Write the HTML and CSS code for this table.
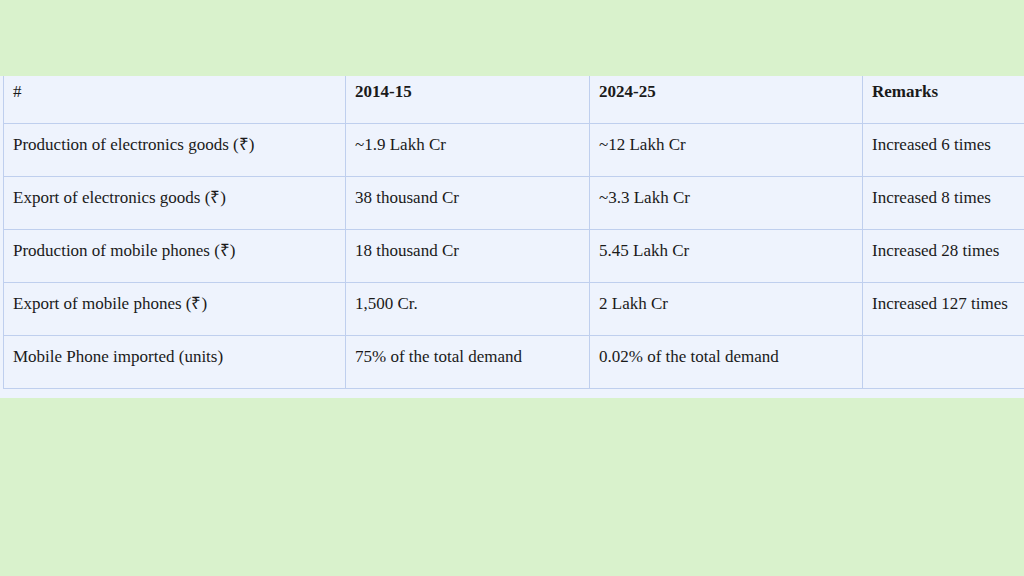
FILE: index.html
```html
<!DOCTYPE html>
<html lang="en">
<head>
<meta charset="utf-8">
<title>Electronics manufacturing 2014-15 vs 2024-25</title>
<link rel="stylesheet" href="styles.css">
</head>
<body>
<div class="top-gap"></div>
<div class="panel">
  <table class="data">
    <colgroup>
      <col class="c1"><col class="c2"><col class="c3"><col class="c4">
    </colgroup>
    <thead>
      <tr><th class="plain">#</th><th>2014-15</th><th>2024-25</th><th>Remarks</th></tr>
    </thead>
    <tbody>
      <tr><td>Production of electronics goods (₹)</td><td>~1.9 Lakh Cr</td><td>~12 Lakh Cr</td><td>Increased 6 times</td></tr>
      <tr><td>Export of electronics goods (₹)</td><td>38 thousand Cr</td><td>~3.3 Lakh Cr</td><td>Increased 8 times</td></tr>
      <tr><td>Production of mobile phones (₹)</td><td>18 thousand Cr</td><td>5.45 Lakh Cr</td><td>Increased 28 times</td></tr>
      <tr><td>Export of mobile phones (₹)</td><td>1,500 Cr.</td><td>2 Lakh Cr</td><td>Increased 127 times</td></tr>
      <tr><td>Mobile Phone imported (units)</td><td>75% of the total demand</td><td>0.02% of the total demand</td><td></td></tr>
    </tbody>
  </table>
</div>
</body>
</html>
```

FILE: styles.css
```css
html, body {
  margin: 0;
  padding: 0;
}
body {
  background: #d9f2cc;
  width: 1024px;
  height: 576px;
  overflow: hidden;
  font-family: "Liberation Serif", "Times New Roman", serif;
  color: #1a1a1a;
}
.top-gap {
  height: 76px;
}
.panel {
  background: #eef3fd;
  height: 322px;
  overflow: hidden;
  padding-left: 3px;
}
.data {
  border-collapse: collapse;
  table-layout: fixed;
  width: 1060px;
  margin-top: -6px;
  font-size: 17px;
  line-height: 20px;
}
.c1 { width: 342px; }
.c2 { width: 244px; }
.c3 { width: 273px; }
.c4 { width: 201px; }
.data th,
.data td {
  border: 1px solid #bfcfee;
  padding: 11px 9px 21px;
  height: 20px;
  text-align: left;
  vertical-align: top;
  white-space: nowrap;
}
.data th {
  font-weight: bold;
}
.data th.plain {
  font-weight: normal;
}
```
